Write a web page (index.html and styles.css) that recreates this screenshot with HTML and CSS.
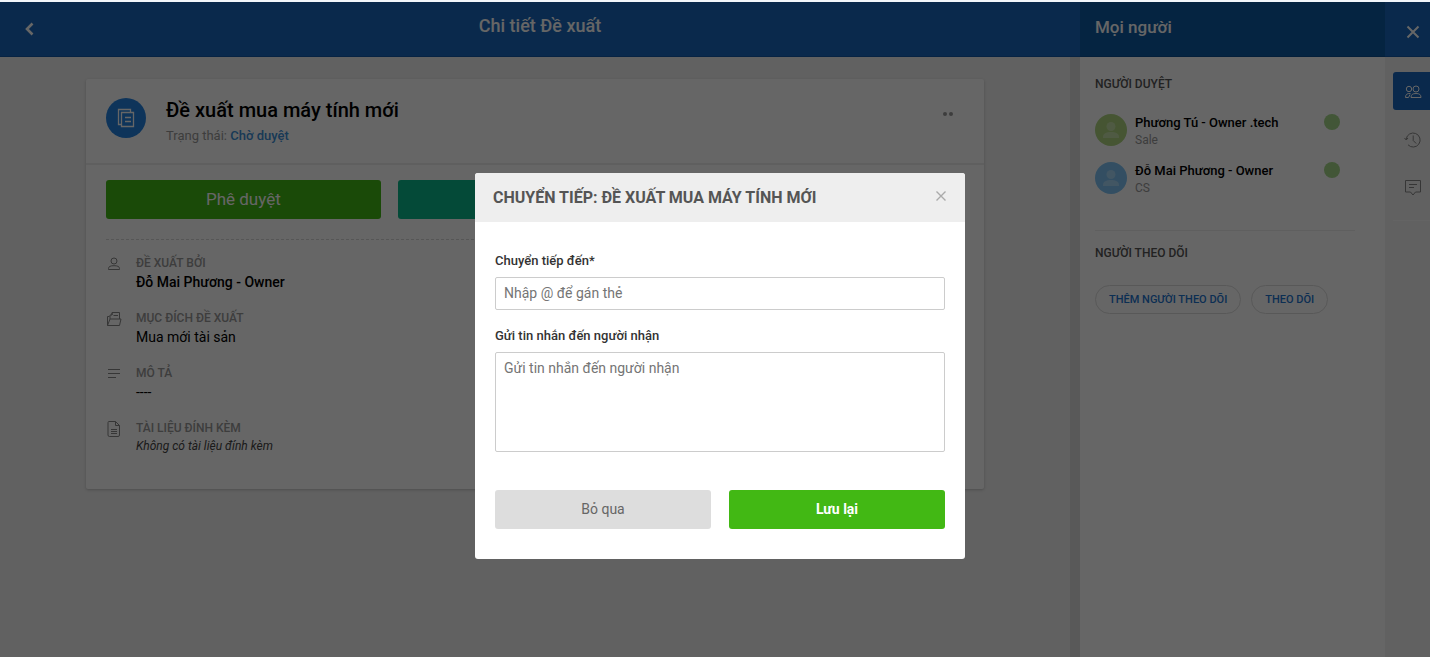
FILE: index.html
```html
<!DOCTYPE html>
<html lang="vi">
<head>
    <meta charset="UTF-8">
    <meta name="viewport" content="width=device-width, initial-scale=1.0">
    <title>Chi tiết Đề xuất</title>
    <link rel="stylesheet" href="styles.css">
</head>
<body>
    <div class="app">
        <div class="page">
            <header class="page-header">
                <button type="button" class="back-btn" aria-label="Quay lại">
                    <svg width="10" height="14" viewBox="0 0 10 14"><path d="M7.500 1.500L2 7l5.500 5.500" fill="none" stroke="#fff" stroke-width="2.600"/></svg>
                </button>
                <h1>Chi tiết Đề xuất</h1>
            </header>
            <main class="content">
                <section class="card">
                    <div class="card-header">
                        <div class="card-icon">
                            <svg width="18" height="20" viewBox="0 0 18 20" fill="none" stroke="#fff" stroke-width="1.300">
                                <path d="M4 16.500H1.500V1.500h12V4M4.500 4.500h12v14h-12zM8 9.500h6M8 13.500h6"/>
                            </svg>
                        </div>
                        <div class="card-title">
                            <h2>Đề xuất mua máy tính mới</h2>
                            <p>Trạng thái: <a href="#">Chờ duyệt</a></p>
                        </div>
                        <button type="button" class="more-btn" aria-label="Thêm">
                            <svg width="12" height="4" viewBox="0 0 12 4" fill="#999"><circle cx="3" cy="2" r="2"/><circle cx="9" cy="2" r="2"/></svg>
                        </button>
                    </div>
                    <div class="card-body">
                        <div class="actions">
                            <button type="button" class="action approve">Phê duyệt</button>
                            <button type="button" class="action forward" aria-label="Chuyển tiếp"></button>
                            <button type="button" class="action reject" aria-label="Từ chối"></button>
                        </div>
                        <dl class="details">
                            <div class="detail">
                                <svg width="16" height="16" viewBox="0 0 16 16"><circle cx="8" cy="5" r="3"/><path d="M2.500 13.500v-1c0-2 2-2.800 5.500-2.800s5.500.8 5.500 2.800v1z"/></svg>
                                <dt>Đề xuất bởi</dt>
                                <dd class="strong">Đỗ Mai Phương - Owner</dd>
                            </div>
                            <div class="detail">
                                <svg width="16" height="16" viewBox="0 0 16 16"><path d="M1.500 14.500V5.500h2M1.500 14.500l2.500-6.500h11l-1.500 6.500zM4 8V4h2V1.500h7.500V8M6 4V2M12 14.500H2M7.500 4.500H12"/></svg>
                                <dt>Mục đích đề xuất</dt>
                                <dd>Mua mới tài sản</dd>
                            </div>
                            <div class="detail">
                                <svg width="16" height="16" viewBox="0 0 16 16"><path d="M2 3.500h12M2 7.500h12M2 11.500h8"/></svg>
                                <dt>Mô tả</dt>
                                <dd>----</dd>
                            </div>
                            <div class="detail">
                                <svg width="16" height="16" viewBox="0 0 16 16"><path d="M3 .5h6.500l4 4v9.500q0 1.500-1.500 1.500H3.500Q2 15.500 2 14V1.500Q2 .5 3 .5zM9.500.5v4h4M5 8.500h6M5 10.500h6M5 12.500h6"/></svg>
                                <dt>Tài liệu đính kèm</dt>
                                <dd class="empty">Không có tài liệu đính kèm</dd>
                            </div>
                        </dl>
                    </div>
                </section>
            </main>
        </div>

        <aside class="people">
            <header class="people-header">
                <h2>Mọi người</h2>
            </header>
            <div class="people-body">
                <section class="approvers">
                    <h3>Người duyệt</h3>
                    <ul>
                        <li class="person">
                            <svg class="avatar green" width="32" height="32" viewBox="0 0 32 32"><circle cx="16" cy="12.500" r="4.500"/><path d="M8 24v-1c0-3.500 3-5 8-5s8 1.500 8 5v1z"/></svg>
                            <div>
                                <strong>Phương Tú - Owner .tech</strong>
                                <span>Sale</span>
                            </div>
                            <i class="status"></i>
                        </li>
                        <li class="person">
                            <svg class="avatar blue" width="32" height="32" viewBox="0 0 32 32"><circle cx="16" cy="12.500" r="4.500"/><path d="M8 24v-1c0-3.500 3-5 8-5s8 1.500 8 5v1z"/></svg>
                            <div>
                                <strong>Đỗ Mai Phương - Owner</strong>
                                <span>CS</span>
                            </div>
                            <i class="status"></i>
                        </li>
                    </ul>
                </section>
                <section class="followers">
                    <h3>Người theo dõi</h3>
                    <div class="pills">
                        <button type="button">Thêm người theo dõi</button>
                        <button type="button">Theo dõi</button>
                    </div>
                </section>
            </div>
        </aside>

        <nav class="rail">
            <button type="button" class="rail-close" aria-label="Đóng">
                <svg width="14" height="14" viewBox="0 0 14 14"><path d="M1.500 1.500l11 11M12.500 1.500l-11 11" fill="none" stroke="#fff" stroke-width="2"/></svg>
            </button>
            <div class="rail-tabs">
                <button type="button" class="active" aria-label="Mọi người">
                    <svg width="18" height="18" viewBox="0 0 18 18"><circle cx="5" cy="6" r="2.700"/><circle cx="12" cy="6" r="3"/><path d="M7 14.500c0-2.800 1.500-4 5-4s5 1.200 5 4zM6.500 10.500C3 10.200 1.500 11.500 1.500 14.500h3l1.500-3"/></svg>
                </button>
                <button type="button" aria-label="Lịch sử">
                    <svg width="18" height="18" viewBox="0 0 18 18"><path d="M2.200 8A7 7 0 1 1 4 13.800M.5 7l1.700 2L4 7M9.200 4.500v5l3 3"/></svg>
                </button>
                <button type="button" aria-label="Bình luận">
                    <svg width="18" height="18" viewBox="0 0 18 18"><path d="M1.500 1.500h15v11.500h-5L9 16l-2.500-3h-5zM5 5.500h8M5 8.500h5"/></svg>
                </button>
            </div>
        </nav>
    </div>

    <div class="overlay">
        <form class="modal" role="dialog" aria-labelledby="modalTitle">
            <div class="modal-header">
                <h2 id="modalTitle">Chuyển tiếp: Đề xuất mua máy tính mới</h2>
                <button type="button" class="modal-close" aria-label="Đóng">
                    <svg width="12" height="12" viewBox="0 0 12 12"><path d="M1.500 1.500l9 9M10.500 1.500l-9 9" fill="none" stroke="#aaa" stroke-width="1.400"/></svg>
                </button>
            </div>
            <div class="modal-body">
                <label for="receiver">Chuyển tiếp đến*</label>
                <input type="text" id="receiver" name="receiver" placeholder="Nhập @ để gán thẻ">
                <label for="message">Gửi tin nhắn đến người nhận</label>
                <textarea id="message" name="message" placeholder="Gửi tin nhắn đến người nhận"></textarea>
                <div class="modal-actions">
                    <button type="button" class="cancel">Bỏ qua</button>
                    <button type="submit" class="save">Lưu lại</button>
                </div>
            </div>
        </form>
    </div>
</body>
</html>
```

FILE: styles.css
```css
* {
    box-sizing: border-box;
}

body {
    font-family: Roboto, "Liberation Sans", sans-serif;
    font-size: 14px;
    color: #000;
    margin: 0;
    border-top: 2px solid #f2f6fa;
}

h1, h2, h3, p, ul, dl, dd {
    margin: 0;
    padding: 0;
}

button {
    font-family: inherit;
    padding: 0;
    border: none;
    background: none;
    cursor: pointer;
}

svg {
    display: block;
    flex: none;
}

.app {
    display: flex;
    min-height: calc(100vh - 2px);
}

/* main page */
.page {
    flex: 1;
    display: flex;
    flex-direction: column;
}

.page-header {
    display: grid;
    grid-template-columns: 60px 1fr 60px;
    height: 55px;
    background-color: #1967be;
    border-bottom: 1px solid #1259a8;
    color: #fff;
}

.page-header h1 {
    font-size: 18px;
    font-weight: 500;
    line-height: 48px;
    text-align: center;
}

.back-btn {
    display: flex;
    align-items: center;
    justify-content: center;
}

.content {
    flex: 1;
    padding: 22px 85px;
    background-color: #f2f2f2;
    border-right: 10px solid #dedede;
}

.card {
    background-color: #fff;
    margin: 0 1px;
    border-radius: 2px;
    box-shadow: 0 1px 3px rgba(0, 0, 0, 0.2);
}

.card-header {
    display: flex;
    gap: 20px;
    height: 86px;
    padding: 19px 30px 0 20px;
    border-bottom: 2px solid #eee;
}

.card-icon {
    display: flex;
    align-items: center;
    justify-content: center;
    width: 40px;
    height: 40px;
    border-radius: 50%;
    background-color: #2483e2;
}

.card-title {
    flex: 1;
}

.card-title h2 {
    font-size: 20px;
    font-weight: 500;
    line-height: 24px;
}

.card-title p {
    margin-top: 4px;
    font-size: 13px;
    line-height: 20px;
    color: #999;
}

.card-title a {
    color: #3c8fd6;
    font-weight: 500;
    text-decoration: none;
}

.more-btn {
    align-self: flex-start;
    padding: 14px 0;
}

.card-body {
    padding: 15px 20px;
}

.actions {
    display: grid;
    grid-template-columns: repeat(3, 1fr);
    gap: 17px;
    padding-bottom: 20px;
    border-bottom: 1px dashed #d8d8d8;
}

.action {
    height: 39px;
    padding-bottom: 2px;
    border-radius: 3px;
    color: #fff;
    font-size: 17px;
}

.approve {
    background-color: #42b814;
}

.forward {
    background-color: #0cba8c;
}

.reject {
    background-color: #e04040;
}

.detail {
    display: grid;
    grid-template-columns: 16px 1fr;
    column-gap: 14px;
    height: 55px;
}

.details {
    padding-top: 14px;
}

.detail svg {
    grid-row: span 2;
    margin-top: 2px;
    fill: none;
    stroke: #888;
}

.detail dt {
    height: 18px;
    font-size: 12px;
    font-weight: 500;
    line-height: 18px;
    text-transform: uppercase;
    color: #999;
}

.detail dd {
    height: 37px;
    font-size: 14px;
    line-height: 20px;
}

.detail .strong {
    font-weight: 500;
}

.detail .empty {
    font-size: 12px;
    line-height: 18px;
    font-style: italic;
    color: #444;
}

/* people panel */
.people {
    width: 305px;
    background-color: #fff;
}

.people-header {
    height: 55px;
    padding-left: 15px;
    background-color: #0e5aa4;
    border-bottom: 1px solid #0b4f92;
    color: #fff;
}

.people-header h2 {
    font-size: 17px;
    font-weight: 500;
    line-height: 50px;
}

.people-body {
    padding: 18px 30px 0 15px;
}

.people-body h3 {
    font-size: 12px;
    font-weight: 500;
    line-height: 18px;
    text-transform: uppercase;
    color: #555;
}

.approvers {
    padding-bottom: 20px;
    border-bottom: 1px solid #eee;
}

.approvers ul {
    padding-top: 21px;
    list-style: none;
}

.person {
    display: flex;
    gap: 8px;
    height: 48px;
    padding-right: 15px;
}

.person div {
    flex: 1;
}

.person strong,
.person span {
    display: block;
    font-size: 13px;
    font-weight: 500;
    line-height: 17px;
}

.person span {
    font-size: 12px;
    font-weight: 400;
    line-height: 18px;
    color: #999;
}

.avatar {
    border-radius: 50%;
    fill: #fff;
    fill-opacity: 0.3;
}

.avatar.green {
    background-color: #aed581;
}

.avatar.blue {
    background-color: #7fc4f5;
}

.status {
    width: 16px;
    height: 16px;
    border-radius: 50%;
    background-color: #a5d68a;
}

.followers {
    padding-top: 13px;
}

.pills {
    display: flex;
    gap: 10px;
    padding-top: 23px;
}

.pills button {
    height: 29px;
    padding: 0 13px;
    border: 1px solid #ddd;
    border-radius: 15px;
    font-size: 11px;
    font-weight: 500;
    text-transform: uppercase;
    color: #1e75d0;
}

/* right rail */
.rail {
    width: 45px;
    background-color: #f3f3f3;
}

.rail-close {
    display: flex;
    align-items: center;
    justify-content: center;
    width: 100%;
    height: 55px;
    padding: 5px 0 0 10px;
    background-color: #1967be;
    border-bottom: 1px solid #1259a8;
}

.rail-tabs {
    display: flex;
    flex-direction: column;
    gap: 10px;
    margin-left: 8px;
    padding: 15px 0 14px;
    border-bottom: 1px solid #fafafa;
}

.rail-tabs button {
    display: flex;
    align-items: center;
    justify-content: center;
    height: 38px;
    padding: 2px 0 0 3px;
    border-radius: 3px 0 0 3px;
}

.rail-tabs svg {
    fill: none;
    stroke: #888;
}

.rail-tabs .active {
    background-color: #1967be;
}

.rail-tabs .active svg {
    stroke: #fff;
}

/* forward dialog */
.overlay {
    position: fixed;
    top: 2px;
    right: 0;
    bottom: 0;
    left: 0;
    padding: 171px 10px 0 20px;
    overflow: auto;
    background-color: rgba(0, 0, 0, 0.6);
}

.modal {
    max-width: 490px;
    margin: 0 auto;
    border-radius: 3px;
    overflow: hidden;
    background-color: #fff;
}

.modal-header {
    display: flex;
    align-items: center;
    justify-content: space-between;
    height: 49px;
    padding: 0 18px;
    background-color: #eee;
}

.modal-header h2 {
    font-size: 16px;
    font-weight: 700;
    text-transform: uppercase;
    color: #555;
}

.modal-close {
    padding-bottom: 4px;
}

.modal-body {
    padding: 29px 20px 30px;
}

.modal-body label {
    display: block;
    height: 26px;
    font-size: 13px;
    font-weight: 500;
    line-height: 20px;
    color: #333;
}

.modal-body input,
.modal-body textarea {
    display: block;
    width: 100%;
    height: 33px;
    padding: 7px 8px;
    border: 1px solid #ccc;
    border-radius: 2px;
    font-family: inherit;
    font-size: 14px;
}

.modal-body input {
    margin-bottom: 16px;
    padding: 6px 8px 8px;
}

.modal-body textarea {
    height: 100px;
    resize: none;
}

.modal-body ::placeholder {
    color: #757575;
}

.modal-actions {
    display: grid;
    grid-template-columns: 1fr 1fr;
    gap: 18px;
    margin-top: 38px;
}

.modal-actions button {
    height: 39px;
    padding-bottom: 2px;
    border-radius: 3px;
    font-size: 14px;
}

.cancel {
    background-color: #ddd;
    color: #666;
}

.save {
    background-color: #42b814;
    color: #fff;
    font-weight: 700;
}
```
